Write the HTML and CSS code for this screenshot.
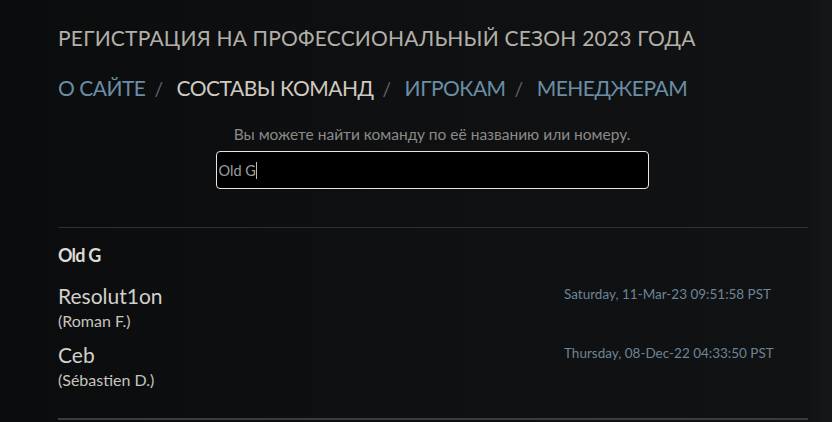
FILE: index.html
```html
<!DOCTYPE html>
<html lang="ru">
<head>
<meta charset="utf-8">
<link rel="stylesheet" href="styles.css">
</head>
<body>
<div class="page">
  <h1 class="title">РЕГИСТРАЦИЯ НА ПРОФЕССИОНАЛЬНЫЙ СЕЗОН 2023 ГОДА</h1>
  <nav class="nav">
    <a class="link">О САЙТЕ</a><span class="sep">/</span>
    <a class="link active">СОСТАВЫ КОМАНД</a><span class="sep">/</span>
    <a class="link">ИГРОКАМ</a><span class="sep">/</span>
    <a class="link">МЕНЕДЖЕРАМ</a>
  </nav>
  <div class="search">
    <div class="hint">Вы можете найти команду по её названию или номеру.</div>
    <div class="input"><span class="value">Old G</span><span class="caret"></span></div>
  </div>
  <section class="team">
    <div class="team-name">Old G</div>
    <div class="row">
      <div class="player"><div class="nick">Resolut1on</div><div class="real">(Roman F.)</div></div>
      <div class="date">Saturday, 11-Mar-23 09:51:58 PST</div>
    </div>
    <div class="row">
      <div class="player"><div class="nick">Ceb</div><div class="real">(Sébastien D.)</div></div>
      <div class="date">Thursday, 08-Dec-22 04:33:50 PST</div>
    </div>
  </section>
</div>
</body>
</html>
```
FILE: styles.css
```css
html, body {
  margin: 0;
  padding: 0;
  height: 100%;
}
body {
  background: linear-gradient(90deg, #0b0c0e 0%, #0f1012 50%, #111214 97%, #16171a 100%);
  font-family: Lato, "Open Sans", sans-serif;
  overflow: hidden;
}
.page {
  padding: 25px 24px 0 58px;
}
.title {
  margin: 0;
  font-weight: 400;
  font-size: 21px;
  line-height: 26px;
  color: #b3b0a8;
  letter-spacing: 0.2px;
}
.nav {
  margin-top: 22px;
  display: flex;
  align-items: baseline;
  font-size: 21px;
  line-height: 30px;
  letter-spacing: -0.5px;
}
.link { color: #6b8ea5; }
.link.active { color: #cfcac0; }
.sep {
  color: #5d6670;
  font-size: 19px;
  margin: 0 14px 0 9px;
}
.search {
  margin-top: 19px;
  display: flex;
  flex-direction: column;
  align-items: center;
  width: 748px;
}
.hint {
  color: #8b8a86;
  font-size: 15.5px;
  line-height: 22px;
}
.input {
  margin-top: 6px;
  width: 433px;
  height: 38px;
  box-sizing: border-box;
  border: 1px solid #e6e6e6;
  border-radius: 4px;
  background: #000;
  display: flex;
  align-items: center;
  padding-left: 2px;
}
.value {
  color: #9d9d9d;
  font-size: 14.5px;
}
.caret {
  width: 1px;
  height: 17px;
  background: #bbb;
}
.team {
  margin-top: 38px;
  border-top: 1px solid #2e3033;
  border-bottom: 2px solid #3a3c3f;
  padding: 16px 0 28px;
  width: 750px;
}
.team-name {
  color: #dcdad4;
  font-weight: 700;
  font-size: 18px;
  line-height: 22px;
  letter-spacing: -0.8px;
}
.row {
  display: grid;
  grid-template-columns: 506px 1fr;
  margin-top: 17px;
}
.row + .row { margin-top: 11px; }
.nick {
  color: #d2d0ca;
  font-size: 21px;
  line-height: 26px;
}
.real {
  margin-top: 2px;
  color: #c6c4be;
  font-size: 16px;
  line-height: 20px;
}
.date {
  color: #6d8596;
  font-size: 13.5px;
  line-height: 20px;
  padding-top: 1px;
}
```
